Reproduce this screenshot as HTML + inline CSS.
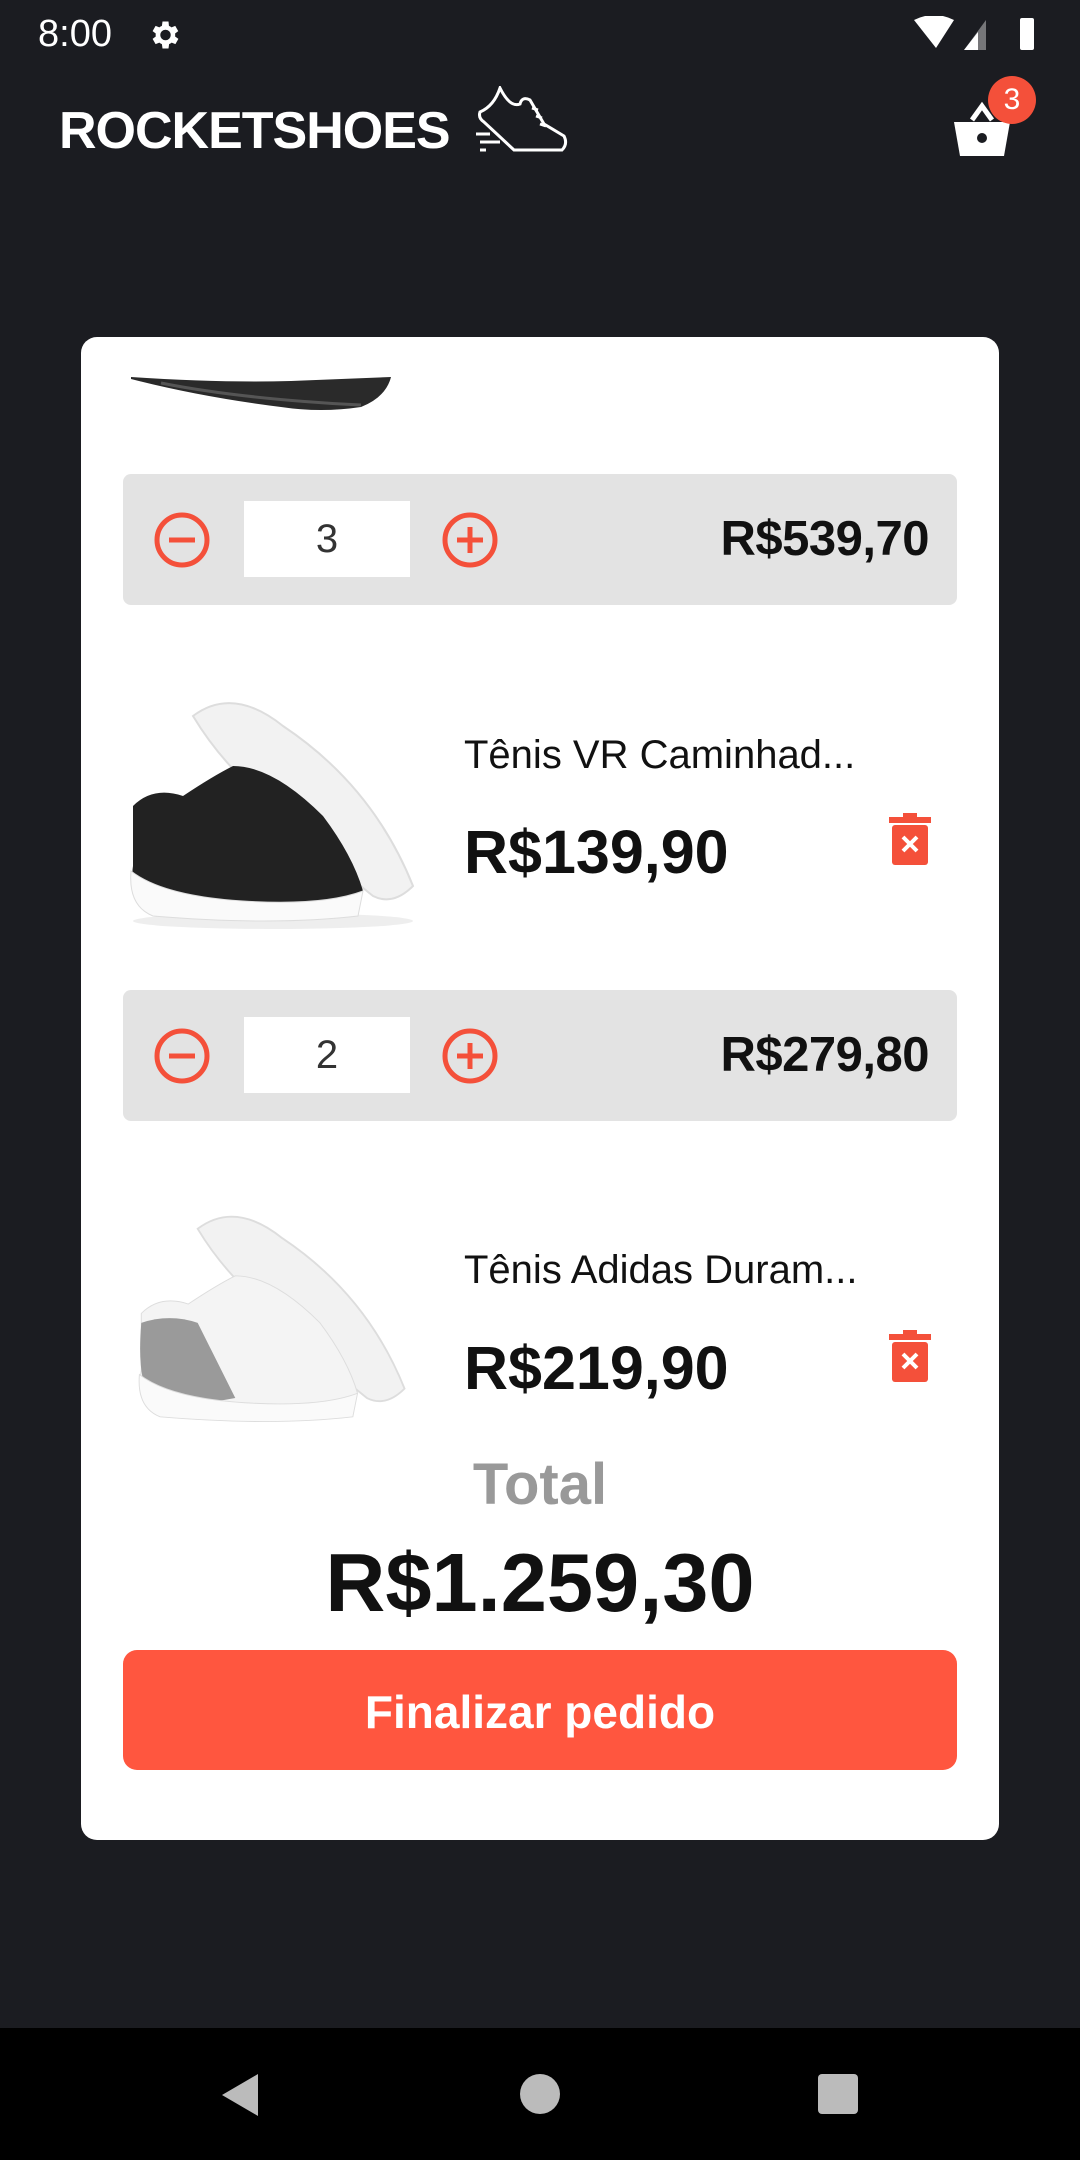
<!DOCTYPE html>
<html><head><meta charset="utf-8"><style>
*{margin:0;padding:0;box-sizing:border-box}
body{width:1080px;height:2160px;background:#1b1c21;font-family:"Liberation Sans",sans-serif;position:relative;overflow:hidden}
.a{position:absolute}
.card{left:81px;top:337px;width:918px;height:1503px;background:#fff;border-radius:16px;overflow:hidden}
.bar{left:42px;width:834px;height:131px;background:#e3e3e3;border-radius:8px}
.inp{left:121px;top:27px;width:166px;height:76px;background:#fff;font-size:40px;color:#333;text-align:center;line-height:76px}
.sub{right:28px;top:0;line-height:131px;font-size:49px;font-weight:bold;color:#111;letter-spacing:-0.5px}
.title{left:383px;font-size:40px;color:#111}
.price{left:383px;font-size:61px;font-weight:bold;color:#111}
</style></head><body>
<div class="a" style="left:38px;top:12px;font-size:38px;color:#fff;line-height:44px">8:00</div>
<svg class="a" style="left:146px;top:17px" width="36" height="36" viewBox="0 0 24 24"><path fill="#fff" d="M19.4 13a7.5 7.5 0 0 0 0-2l2.1-1.6-2-3.5-2.5 1a7 7 0 0 0-1.7-1L15 3h-4l-.4 2.9a7 7 0 0 0-1.7 1l-2.5-1-2 3.5L6.5 11a7.5 7.5 0 0 0 0 2l-2.1 1.6 2 3.5 2.5-1a7 7 0 0 0 1.7 1L11 21h4l.4-2.9a7 7 0 0 0 1.7-1l2.5 1 2-3.5zM13 15.5a3.5 3.5 0 1 1 0-7 3.5 3.5 0 0 1 0 7z"/></svg>
<svg class="a" style="left:914px;top:16px" width="130" height="36" viewBox="0 0 130 36"><path fill="#fff" d="M0 4Q20-6 40 4L22 32Z"/><path fill="#fff" d="M50 34L72 4V34Z" opacity=".4"/><path fill="#fff" d="M50 34L64 16V34Z"/><rect x="106" y="2" width="14" height="32" rx="2" fill="#fff"/></svg>
<div class="a" style="left:59px;top:101px;font-size:52px;font-weight:bold;color:#fff;line-height:60px;letter-spacing:-1px">ROCKETSHOES</div>
<svg class="a" style="left:474px;top:86px" width="96" height="68" viewBox="0 0 96 68" fill="none" stroke="#fff" stroke-width="3"><path d="M26 2Q20 20 6 26Q4 32 10 36L40 64H88Q94 58 90 50L70 38L56 14Q48 10 46 18Q36 22 26 2Z"/><path d="M40 64H88M58 22l6 2M62 30l6 2M66 38l6 2M2 48h14M6 56h20M6 64h6"/></svg>
<svg class="a" style="left:950px;top:100px" width="64" height="60" viewBox="0 0 64 60"><path d="M22 20L32 6L42 20" stroke="#fff" stroke-width="5" fill="none"/><path fill="#fff" d="M4 22H60L54 56H10Z"/><circle cx="32" cy="38" r="5" fill="#1b1c21"/></svg>
<div class="a" style="left:988px;top:76px;width:48px;height:48px;border-radius:50%;background:#f4503a;color:#fff;font-size:30px;text-align:center;line-height:48px">3</div>

<div class="a card">
<svg class="a" style="left:40px;top:40px" width="300" height="60" viewBox="0 0 300 60"><path d="M10 0Q100 6 170 4L270 0Q265 20 240 30Q200 36 160 30Q80 20 10 2Z" fill="#2a2a2a"/><path d="M40 6Q120 22 240 28" stroke="#555" stroke-width="3" fill="none"/></svg>
<div class="a bar" style="top:137px">
<svg class="a" style="left:30px;top:37px" width="58" height="58" viewBox="0 0 58 58"><circle cx="29" cy="29" r="25" fill="none" stroke="#f4503a" stroke-width="5"/><path d="M16 29H42" stroke="#f4503a" stroke-width="5"/></svg>
<div class="a inp">3</div>
<svg class="a" style="left:318px;top:37px" width="58" height="58" viewBox="0 0 58 58"><circle cx="29" cy="29" r="25" fill="none" stroke="#f4503a" stroke-width="5"/><path d="M16 29H42M29 16V42" stroke="#f4503a" stroke-width="5"/></svg>
<div class="a sub">R$539,70</div>
</div>

<svg class="a" style="left:42px;top:359px" width="297" height="234" viewBox="0 0 297 234"><ellipse cx="150" cy="225" rx="140" ry="8" fill="#eee"/><path d="M70 20Q110-10 160 30Q250 90 290 190Q270 210 250 200Q200 160 150 110Q100 70 70 20Z" fill="#f2f2f2" stroke="#ddd" stroke-width="2"/><path d="M10 110Q30 90 60 100Q90 80 110 70Q150 70 200 120Q230 160 240 195L230 215Q150 225 40 210Q5 200 10 170Z" fill="#222"/><path d="M8 175Q40 200 120 205Q200 210 240 195L235 220Q150 230 30 220Q5 210 8 175Z" fill="#fafafa" stroke="#ddd"/></svg>
<div class="a title" style="top:396px">Tênis VR Caminhad...</div>
<div class="a price" style="top:480px">R$139,90</div>
<svg class="a" style="left:808px;top:476px" width="42" height="52" viewBox="0 0 42 52"><rect x="0" y="4" width="42" height="6" fill="#f4503a"/><rect x="14" y="0" width="14" height="6" fill="#f4503a"/><rect x="3" y="12" width="36" height="40" rx="3" fill="#f4503a"/><path d="M14 24l14 14M28 24L14 38" stroke="#fff" stroke-width="4"/></svg>

<div class="a bar" style="top:653px">
<svg class="a" style="left:30px;top:37px" width="58" height="58" viewBox="0 0 58 58"><circle cx="29" cy="29" r="25" fill="none" stroke="#f4503a" stroke-width="5"/><path d="M16 29H42" stroke="#f4503a" stroke-width="5"/></svg>
<div class="a inp">2</div>
<svg class="a" style="left:318px;top:37px" width="58" height="58" viewBox="0 0 58 58"><circle cx="29" cy="29" r="25" fill="none" stroke="#f4503a" stroke-width="5"/><path d="M16 29H42M29 16V42" stroke="#f4503a" stroke-width="5"/></svg>
<div class="a sub">R$279,80</div>
</div>

<svg class="a" style="left:42px;top:873px" width="297" height="220" viewBox="0 0 297 234"><path d="M70 20Q110-10 160 30Q250 90 290 190Q270 210 250 200Q200 160 150 110Q100 70 70 20Z" fill="#f2f2f2" stroke="#ddd" stroke-width="2"/><path d="M10 110Q30 90 60 100Q90 80 110 70Q150 70 200 120Q230 160 240 195L230 215Q150 225 40 210Q5 200 10 170Z" fill="#f4f4f4" stroke="#ddd"/><path d="M10 120Q40 110 70 120L110 200Q60 210 20 200Q5 180 10 120Z" fill="#9a9a9a"/><path d="M8 175Q40 200 120 205Q200 210 240 195L235 220Q150 230 30 220Q5 210 8 175Z" fill="#fafafa" stroke="#ddd"/></svg>
<div class="a title" style="top:911px">Tênis Adidas Duram...</div>
<div class="a price" style="top:996px">R$219,90</div>
<svg class="a" style="left:808px;top:993px" width="42" height="52" viewBox="0 0 42 52"><rect x="0" y="4" width="42" height="6" fill="#f4503a"/><rect x="14" y="0" width="14" height="6" fill="#f4503a"/><rect x="3" y="12" width="36" height="40" rx="3" fill="#f4503a"/><path d="M14 24l14 14M28 24L14 38" stroke="#fff" stroke-width="4"/></svg>

<div class="a" style="left:0;width:918px;top:1114px;text-align:center;font-size:58px;font-weight:bold;color:#999;text-indent:0px">Total</div>
<div class="a" style="left:0;width:918px;top:1198px;text-align:center;font-size:83px;font-weight:bold;color:#111">R$1.259,30</div>
<div class="a" style="left:42px;top:1313px;width:834px;height:120px;border-radius:14px;background:#ff563f;color:#fff;font-size:46px;font-weight:bold;text-align:center;line-height:124px">Finalizar pedido</div>
</div>

<div class="a" style="left:0;top:2028px;width:1080px;height:132px;background:#000"></div>
<svg class="a" style="left:218px;top:2072px" width="44" height="46" viewBox="0 0 44 46"><path d="M40 2V44L4 23Z" fill="#bbb"/></svg>
<div class="a" style="left:520px;top:2074px;width:40px;height:40px;border-radius:50%;background:#bbb"></div>
<div class="a" style="left:818px;top:2074px;width:40px;height:40px;border-radius:4px;background:#bbb"></div>
</body></html>
